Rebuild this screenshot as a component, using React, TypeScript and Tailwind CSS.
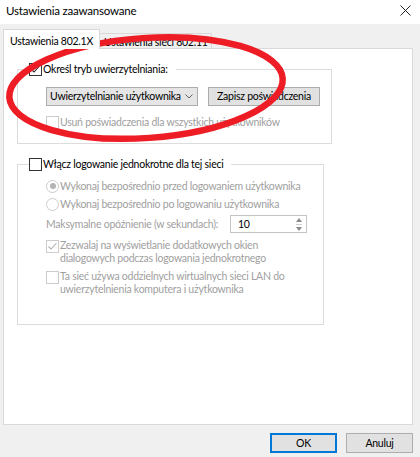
import React from 'react';

type BoxProps = { checked?: boolean; disabled?: boolean };

// Small square checkbox in the classic Windows look
const CheckBox: React.FC<BoxProps> = ({ checked, disabled }) => (
  <span
    className={`w-[13px] h-[13px] shrink-0 border bg-white flex items-center justify-center ${
      disabled ? 'border-[#cccccc]' : 'border-[#333333]'
    }`}
  >
    {checked && (
      <svg width="11" height="11" viewBox="0 0 11 11">
        <polyline
          points="1.5,5.5 4,8 9.5,2"
          fill="none"
          stroke={disabled ? '#b0b0b0' : '#222222'}
          strokeWidth="1.1"
        />
      </svg>
    )}
  </span>
);

const Radio: React.FC<BoxProps> = ({ checked }) => (
  <span className="w-[13px] h-[13px] shrink-0 rounded-full border border-[#cccccc] bg-white flex items-center justify-center">
    {checked && <span className="w-[6px] h-[6px] rounded-full bg-[#b4b4b4]" />}
  </span>
);

const App: React.FC = () => {
  return (
    <div className="relative w-[420px] h-[457px] bg-[#f0f0f0] overflow-hidden whitespace-nowrap text-[10.5px] tracking-[-0.25px] leading-[13px] text-black font-['Segoe_UI',Lato,sans-serif]">
      {/* Title bar */}
      <div className="h-[24px] bg-white flex items-center justify-between pl-[6px] pr-[9px] pb-[3px]">
        <span className="text-[11.5px] tracking-[-0.2px]">Ustawienia zaawansowane</span>
        <svg width="11" height="11" viewBox="0 0 11 11">
          <path d="M0.5 0.5 L10.5 10.5 M10.5 0.5 L0.5 10.5" stroke="#222" strokeWidth="1" />
        </svg>
      </div>

      <div className="pl-[3px] pt-[5px]">
        {/* Tabs */}
        <div className="flex items-end h-[19px]">
          <div className="relative z-10 -mb-px h-[20px] w-[97px] bg-white border border-b-0 border-[#d9d9d9] pl-[6px] pt-[5px]">
            Ustawienia 802.1X
          </div>
          <div className="h-[15px] w-[112px] bg-[#f0f0f0] border border-l-0 border-b-0 border-[#d9d9d9] pl-[4px] pt-[2px]">
            Ustawienia sieci 802.11
          </div>
        </div>

        {/* Tab page */}
        <div className="w-[410px] h-[377px] bg-white border border-[#d9d9d9] pl-[13px] pt-[13px]">
          <fieldset className="w-[307px] border border-[#dcdcdc] px-[11px] pb-[14px]">
            <legend className="flex items-center gap-[1px] h-[14px] pr-[8px]">
              <CheckBox checked />
              <span>Określ tryb uwierzytelniania:</span>
            </legend>
            <div className="ml-[17px] mt-[11px] flex items-center">
              <div className="w-[152px] h-[19px] bg-[#e5e5e5] border border-[#acacac] pl-[3px] pr-[4px] flex items-center justify-between">
                <span>Uwierzytelnianie użytkownika</span>
                <svg width="8" height="5" viewBox="0 0 8 5">
                  <polyline points="0.5,0.5 4,4 7.5,0.5" fill="none" stroke="#555" strokeWidth="0.9" />
                </svg>
              </div>
              <div className="ml-[10px] w-[112px] h-[19px] bg-[#e1e1e1] border border-[#adadad] flex items-center justify-center">
                Zapisz poświadczenia
              </div>
            </div>
            <div className="ml-[17px] mt-[10px] flex items-center gap-[1px] h-[13px] text-[#a0a0a0]">
              <CheckBox disabled />
              <span>Usuń poświadczenia dla wszystkich użytkowników</span>
            </div>
          </fieldset>

          <fieldset className="mt-[13px] w-[307px] border border-[#dcdcdc] px-[11px] pb-[28px]">
            <legend className="flex items-center gap-[1px] h-[14px] pr-[8px]">
              <CheckBox />
              <span>Włącz logowanie jednokrotne dla tej sieci</span>
            </legend>
            <div className="ml-[17px] text-[#a0a0a0]">
              <div className="mt-[8px] h-[14px] flex items-center gap-[1px]">
                <Radio checked />
                <span>Wykonaj bezpośrednio przed logowaniem użytkownika</span>
              </div>
              <div className="mt-[4px] h-[14px] flex items-center gap-[1px]">
                <Radio />
                <span>Wykonaj bezpośrednio po logowaniu użytkownika</span>
              </div>
              <div className="mt-[4px] h-[18px] flex items-center">
                <span className="w-[184px]">Maksymalne opóźnienie (w sekundach):</span>
                <div className="w-[77px] h-[18px] border border-[#c4c4c4] bg-white flex items-center text-black">
                  <span className="flex-1 pl-[7px]">10</span>
                  <div className="w-[14px] h-full flex flex-col items-center justify-center gap-[2px]">
                    <svg width="6" height="4" viewBox="0 0 6 4">
                      <polygon points="0,4 3,0 6,4" fill="#8a8a8a" />
                    </svg>
                    <span className="w-[6px] h-px bg-[#cfcfcf]" />
                    <svg width="6" height="4" viewBox="0 0 6 4">
                      <polygon points="0,0 3,4 6,0" fill="#8a8a8a" />
                    </svg>
                  </div>
                </div>
              </div>
              <div className="mt-[6px] flex items-start gap-[1px]">
                <span className="mt-[1px]">
                  <CheckBox checked disabled />
                </span>
                <span>
                  Zezwalaj na wyświetlanie dodatkowych okien
                  <br />
                  dialogowych podczas logowania jednokrotnego
                </span>
              </div>
              <div className="mt-[5px] flex items-start gap-[1px]">
                <span className="mt-[1px]">
                  <CheckBox disabled />
                </span>
                <span>
                  Ta sieć używa oddzielnych wirtualnych sieci LAN do
                  <br />
                  uwierzytelnienia komputera i użytkownika
                </span>
              </div>
            </div>
          </fieldset>
        </div>
      </div>

      {/* Dialog buttons */}
      <div className="mt-[8px] flex justify-end gap-[9px] pr-[7px]">
        <div className="w-[67px] h-[20px] bg-[#e1e1e1] border-2 border-[#0078d7] flex items-center justify-center">
          OK
        </div>
        <div className="w-[67px] h-[20px] bg-[#e1e1e1] border border-[#adadad] flex items-center justify-center">
          Anuluj
        </div>
      </div>

      {/* Red marker ring drawn over the dialog */}
      <svg className="absolute inset-0 pointer-events-none" width="420" height="457" viewBox="0 0 420 457">
        <ellipse
          cx="146"
          cy="88"
          rx="137"
          ry="50"
          transform="rotate(-4 146 88)"
          fill="none"
          stroke="#ee1c25"
          strokeWidth="6.5"
        />
      </svg>
    </div>
  );
};

export default App;
